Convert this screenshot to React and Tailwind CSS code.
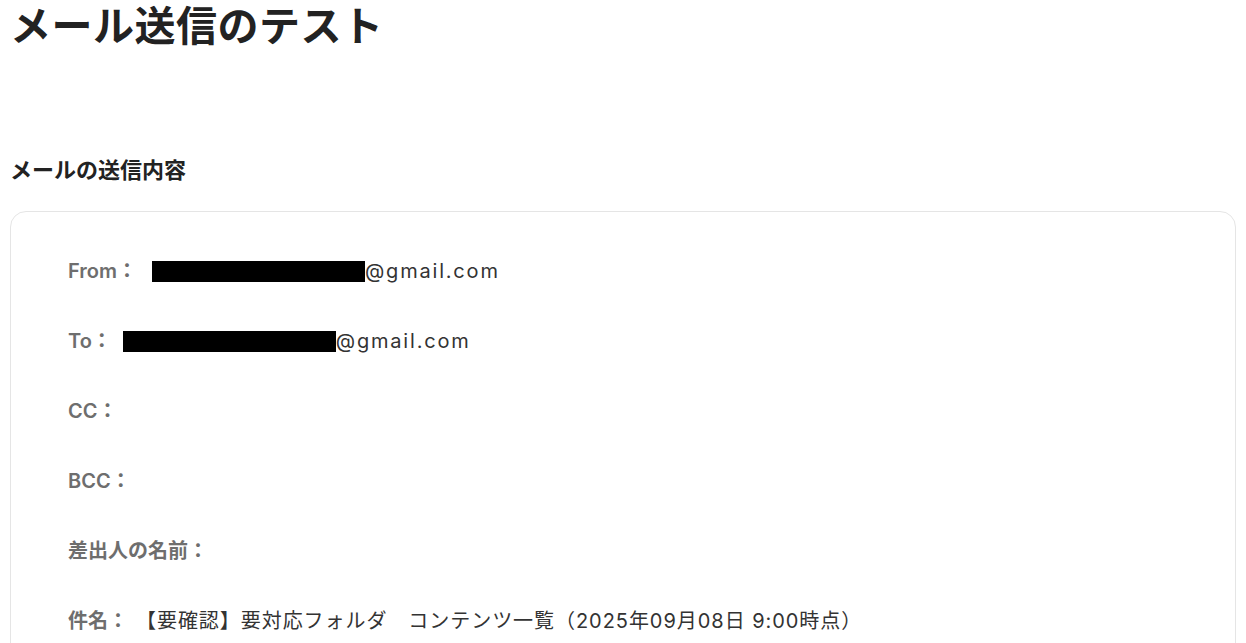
import React from 'react';

const Redacted = ({ width }) => (
  <span className="inline-block h-[21px] bg-black align-middle" style={{ width }} />
);

const Email = ({ gap }) => (
  <span className="flex items-center">
    <span className={gap}><Redacted width={213} /></span>
    <span className="tracking-[1.8px]">@gmail.com</span>
  </span>
);

const rows = [
  { label: 'From：', value: <Email gap="ml-[15px] flex" /> },
  { label: 'To：', value: <Email gap="ml-[11px] flex" /> },
  { label: 'CC：', value: null },
  { label: 'BCC：', value: null },
  { label: '差出人の名前：', value: null },
  {
    label: '件名：',
    value: (
      <span className="ml-[8px] tracking-[0.95px]">
        【要確認】要対応フォルダ　コンテンツ一覧（2025年09月08日 9:00時点）
      </span>
    ),
  },
];

export default function App() {
  return (
    <div className="min-h-screen bg-white px-[10px] font-['Inter','Noto_Sans_CJK_JP',sans-serif] text-[#222]">
      <h1 className="pt-[2px] text-[41px] font-bold leading-[48px] tracking-[0.5px]">メール送信のテスト</h1>

      <h2 className="mt-[106px] text-[22px] font-bold leading-[28px] text-[#222]">メールの送信内容</h2>

      <div className="mt-[27px] rounded-[16px] border border-[#e5e5e5] px-[57px] pt-[44px] pb-8">
        <div className="flex flex-col gap-[40px]">
          {rows.map((row) => (
            <div key={row.label} className="flex h-[30px] items-center text-[20px] leading-[30px]">
              <span className="font-semibold text-[#6e6e6e]">{row.label}</span>
              {row.value && <span className="text-[#333]">{row.value}</span>}
            </div>
          ))}
        </div>
      </div>
    </div>
  );
}
